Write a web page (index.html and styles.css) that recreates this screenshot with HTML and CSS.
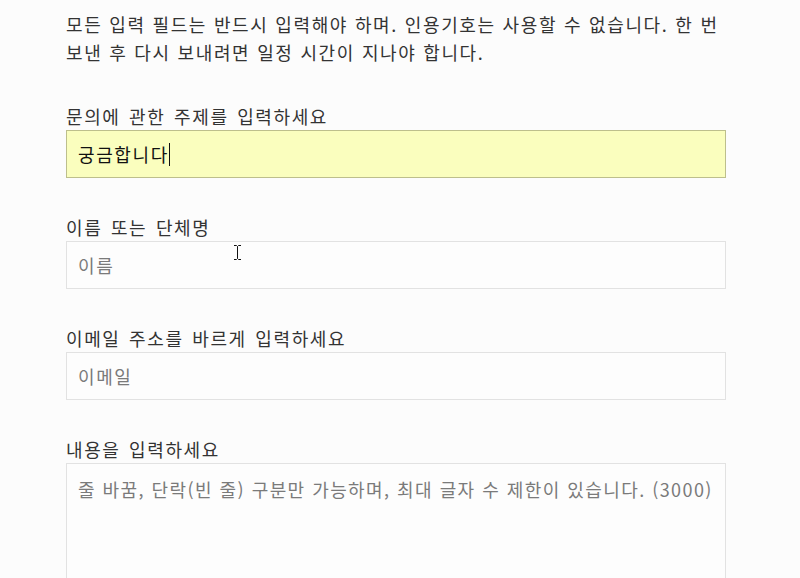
FILE: index.html
```html
<!DOCTYPE html>
<html lang="ko">
  <head>
    <meta charset="UTF-8" />
    <meta name="viewport" content="width=device-width, initial-scale=1.0" />
    <title>문의하기</title>
    <link rel="stylesheet" href="styles.css">
  </head>
  <body>
    <form class="contact-form">
      <p class="notice">모든 입력 필드는 반드시 입력해야 하며. 인용기호는 사용할 수 없습니다. 한 번 보낸 후 다시 보내려면 일정 시간이 지나야 합니다.</p>

      <div class="field">
        <label class="field-label">문의에 관한 주제를 입력하세요</label>
        <div class="field-box field-box--filled">궁금합니다<span class="caret"></span></div>
      </div>

      <div class="field">
        <label class="field-label">이름 또는 단체명</label>
        <div class="field-box">
          <span class="placeholder">이름</span>
          <!-- mouse pointer -->
          <svg class="pointer" width="9" height="17" viewBox="0 0 9 17">
            <path d="M1 1.5 H3.5 L4.5 2.5 L5.5 1.5 H8 M4.5 2.5 V14.5 M1 15.5 H3.5 L4.5 14.5 L5.5 15.5 H8" stroke="#111" stroke-width="1" fill="none"/>
          </svg>
        </div>
      </div>

      <div class="field">
        <label class="field-label">이메일 주소를 바르게 입력하세요</label>
        <div class="field-box"><span class="placeholder">이메일</span></div>
      </div>

      <div class="field">
        <label class="field-label">내용을 입력하세요</label>
        <div class="field-box field-box--area"><span class="placeholder placeholder--area">줄 바꿈, 단락(빈 줄) 구분만 가능하며, 최대 글자 수 제한이 있습니다. (3000)</span></div>
      </div>
    </form>
  </body>
</html>
```

FILE: styles.css
```css
* {
  margin: 0;
  padding: 0;
  box-sizing: border-box;
}

:root {
  --text: #333333;
  --muted: #7a7a7a;
  --line: #e2e2e2;
  --page-bg: #fcfcfc;
}

body {
  font-family: "Noto Sans CJK KR", "Noto Sans", sans-serif;
  background-color: var(--page-bg);
  color: var(--text);
  font-size: 18px;
  letter-spacing: 1.6px;
}

.contact-form {
  width: 660px;
  margin-left: 66px;
  padding-top: 10px;
}

.notice {
  line-height: 28px;
  word-spacing: 0.3px;
  word-break: keep-all;
  margin-bottom: 36px;
}

.field {
  margin-bottom: 35px;
}

.field-label {
  display: block;
  line-height: 28px;
  word-spacing: 2px;
}

.field-box {
  position: relative;
  height: 48px;
  border: 1px solid var(--line);
  background: #fdfdfd;
  padding: 0 11px;
  display: flex;
  align-items: center;
}

.field-box--filled {
  background: #fafebe;
  border-color: #bdbf8c;
  color: #111;
}

.field-box--area {
  height: 140px;
  align-items: flex-start;
  padding-top: 12px;
}

.placeholder {
  color: var(--muted);
}

.placeholder--area {
  letter-spacing: 1.4px;
  word-spacing: 0.2px;
}

/* blinking text caret */
.caret {
  display: inline-block;
  width: 1px;
  height: 23px;
  background: #111;
}

.pointer {
  position: absolute;
  left: 166px;
  top: 2px;
}
```
